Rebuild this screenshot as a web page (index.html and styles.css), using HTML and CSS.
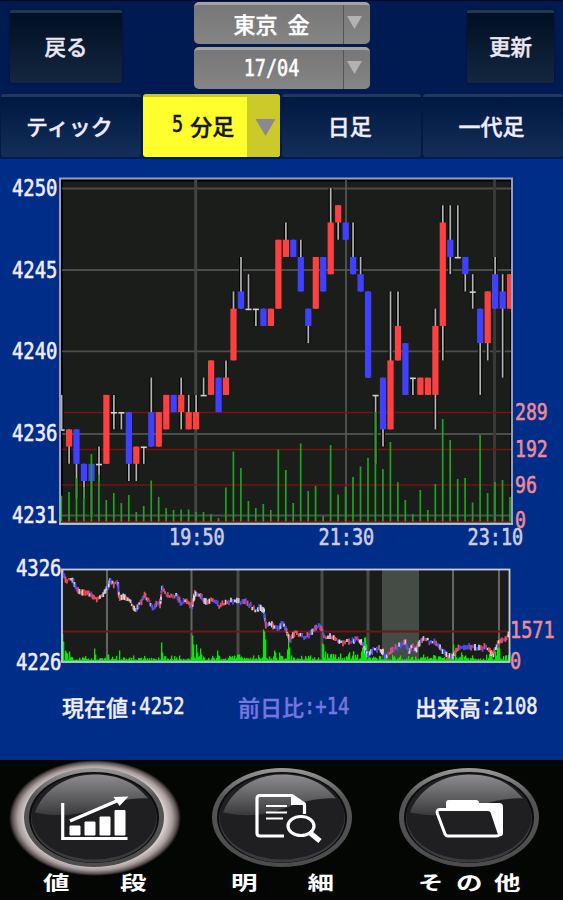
FILE: index.html
```html
<!DOCTYPE html>
<html lang="ja">
<head>
<meta charset="utf-8">
<title>東京 金</title>
<link rel="stylesheet" href="styles.css">
</head>
<body>
<header class="header">
  <button class="nav back">戻る</button>
  <div class="selectors">
    <div class="select"><span class="value">東京 金</span><span class="arrow"></span></div>
    <div class="select"><span class="value"><span class="num">17/04</span></span><span class="arrow"></span></div>
  </div>
  <button class="nav refresh">更新</button>
</header>
<nav class="tabs">
  <div class="tab">ティック</div>
  <div class="tab active"><span class="tab-text"><span class="num">5</span><span class="thin-gap"></span>分足</span><span class="tab-arrow"></span></div>
  <div class="tab">日足</div>
  <div class="tab">一代足</div>
</nav>
<main class="main">
  <svg class="chart" id="chart" viewBox="0 160 563 391" width="563" height="391"></svg>
  <svg class="chart" id="overview" viewBox="0 551 563 125" width="563" height="125"></svg>
  <div class="stats">
    <span class="stat">現在値<span class="num">:4252</span></span>
    <span class="stat change">前日比<span class="num">:+14</span></span>
    <span class="stat">出来高<span class="num">:2108</span></span>
  </div>
</main>
<footer class="footer">
  <svg viewBox="0 760 188 140" width="188" height="140">
    <defs>
      <linearGradient id="ring" x1="0" y1="0" x2="0" y2="1"><stop offset="0" stop-color="#999"/><stop offset=".3" stop-color="#555"/><stop offset="1" stop-color="#4c4c4c"/></linearGradient>
      <linearGradient id="gloss" x1="0" y1="0" x2="0" y2="1"><stop offset="0" stop-color="#8e8c90"/><stop offset="1" stop-color="#3a3a3c"/></linearGradient>
      <radialGradient id="glow"><stop offset=".82" stop-color="#d6cccc"/><stop offset=".9" stop-color="#a79b9b"/><stop offset=".96" stop-color="#5b5252"/><stop offset="1" stop-color="#040604"/></radialGradient>
      <g id="orb">
        <ellipse rx="70" ry="49.500" fill="url(#ring)"/>
        <ellipse rx="65" ry="45.500" fill="#0c0c0e"/>
        <ellipse cy="1" rx="63" ry="44" fill="#3a3a3c"/>
        <ellipse cy="-1" rx="62.500" ry="43" fill="#1f1e20"/>
        <path d="M-59-5C-50-29-26-43 0-43S42-34 54-19C38-20 20-16 2-9C-18-1-40-1-59-5Z" fill="url(#gloss)"/>
      </g>
    </defs>
    <ellipse cx="95" cy="818" rx="86" ry="58" fill="url(#glow)"/>
    <use href="#orb" x="94" y="817.500"/>
    <path d="M62.700 803V838.500H127.500" fill="none" stroke="#fff" stroke-width="3.200"/>
    <path d="M70 826H80V835H70ZM85 822H95V835H85ZM100 817H110V835H100ZM115 810.500H125V835H115Z" fill="#fff" stroke="#fff" stroke-linejoin="round"/>
    <path d="M70 821L119 800" stroke="#fff" stroke-width="3.500"/>
    <path d="M113.500 797L128.500 796.500L119.500 806Z" fill="#fff"/>
    <g class="label"><text transform="translate(43 889.500) scale(1.36 1)">値</text><text transform="translate(120 889.500) scale(1.36 1)">段</text></g>
  </svg>
  <svg viewBox="188 760 187 140" width="187" height="140">
    <use href="#orb" x="282" y="817.500"/>
    <g fill="none" stroke="#fff" stroke-width="3.200" stroke-linejoin="round">
      <path d="M284 836H260Q257 836 257 833V799Q257 795.500 260 795.500H292L304.500 804V814"/>
      <path d="M266 806H287M266 812.500H287M266 818.500H283" stroke-width="2.200"/>
      <ellipse cx="301" cy="826" rx="13" ry="9.500"/>
      <path d="M309 832L320 841" stroke-width="5"/>
    </g>
    <path d="M291 795L306 805H291Z" fill="#fff"/>
    <g class="label"><text transform="translate(231 889.500) scale(1.36 1)">明</text><text transform="translate(307.500 889.500) scale(1.36 1)">細</text></g>
  </svg>
  <svg viewBox="375 760 188 140" width="188" height="140">
    <use href="#orb" x="469" y="817.500"/>
    <path d="M446 809V803Q446 800 449 800H476Q479 800 479 803H500Q503 803.500 503 807V834Q502 837 499 836L491 809Z" fill="#fff"/>
    <path d="M440 809.500H488Q491 809.500 492 812L499 833Q500 836 496 836H448Q446 836 445 834L437.500 814Q436 809.500 440 809.500Z" fill="#202022" stroke="#fff" stroke-width="3"/>
    <g class="label"><text transform="translate(418 889.500) scale(1.3 1)">そ</text><text transform="translate(456 889.500) scale(1.36 1)">の</text><text transform="translate(494 889.500) scale(1.36 1)">他</text></g>
  </svg>
</footer>
<script src="chart.js"></script>
</body>
</html>
```
FILE: styles.css
```css
* { box-sizing: border-box; }
body {
  margin: 0;
  width: 563px;
  height: 900px;
  overflow: hidden;
  display: flex;
  flex-direction: column;
  background: #002d87;
  color: #f0ecfa;
  font-family: "Noto Sans CJK JP", sans-serif;
  font-weight: 500;
  font-size: 22px;
  -webkit-text-stroke: 0.4px currentColor;
}
.num {
  display: inline-block;
  font-family: "DejaVu Sans Mono", monospace;
  font-size: 18.5px;
  line-height: 22px;
  transform: scaleY(1.2);
  -webkit-text-stroke: 0.5px currentColor;
}
.header {
  height: 94px;
  display: flex;
  justify-content: space-between;
  padding: 1px 9px 0 10px;
  background: #001a52;
  border-top: 1px solid #000820;
}
.nav {
  margin: 8px 0 0;
  height: 73px;
  border: 0;
  border-top: 3px solid #23374f;
  border-radius: 2px;
  padding: 0 0 5px;
  background: linear-gradient(#000f22, #132740);
  box-shadow: 0 0 2px #000c30;
  color: #ebe7f3;
  font: inherit;
  font-size: 21.5px;
}
.back { width: 112px; }
.refresh { width: 87px; }
.selectors {
  display: flex;
  flex-direction: column;
  gap: 3px;
  width: 176px;
  margin-left: 48px;
  margin-right: 73px;
}
.select {
  display: flex;
  height: 42px;
  border-radius: 5px;
  border-top: 3px solid #a4a2a5;
  background: linear-gradient(#777, #858585);
  box-shadow: 0 0 1px #333;
  color: #fff;
}
.value {
  flex: 1;
  border-right: 1px solid #555;
  display: flex;
  align-items: center;
  justify-content: center;
  padding: 0 0 4px 6px;
  white-space: pre;
  word-spacing: 5px;
}
.value .num { padding-top: 2px; }
.arrow { width: 26px; padding: 11px 0 0 3px; }
.arrow::before, .tab-arrow::before {
  content: "";
  display: block;
  width: 15px;
  height: 13px;
  background: #b2b2b2;
  clip-path: polygon(0 0, 100% 0, 50% 100%);
}
.tabs { display: flex; gap: 2px; height: 66px; padding: 0 0 2px 1px; background: #001a4b; border-bottom: 1px solid #002d87; }
.tab {
  flex: 1;
  display: flex;
  align-items: center;
  justify-content: center;
  border-top: 3px solid #20395e;
  border-radius: 3px;
  padding: 0 3px 4px 0;
  background: linear-gradient(#001840, #132e59);
}
.active {
  border-top-color: #c9c92e;
  background: #ffff2e;
  color: #15150a;
  align-items: stretch;
  padding: 0;
}
.tab-text { flex: 1; display: flex; align-items: center; justify-content: center; padding: 0 0 4px 17px; }
.thin-gap { width: 7px; }
.tab-arrow { width: 33px; padding: 22px 0 0 9px; background: #cbca28; border-radius: 0 0 3px 0; }
.tab-arrow::before { width: 20px; height: 17px; background: #8c8790; }
.main { flex: 1; }
.chart { display: block; }
.axis text {
  font-family: "DejaVu Sans Mono", monospace;
  font-size: 18.5px;
  fill: #f0ecfa;
  stroke: #f0ecfa;
  stroke-width: 0.5px;
  -webkit-text-stroke: initial;
}
.axis text.volume { fill: #ee8a96; stroke: #ee8a96; }
.axis text.time { fill: #cfcbe2; stroke: #cfcbe2; }
.stats {
  display: grid;
  grid-template-columns: 176px 177px auto;
  padding: 13px 0 0 62px;
  line-height: 32px;
  white-space: nowrap;
}
.stat { display: flex; align-items: center; }
.stat .num { line-height: 32px; font-size: 18.8px; padding-top: 2px; }
.change { color: #7775e0; }
.footer { height: 140px; display: flex; background: #040604; }
.label { fill: #fff; font-size: 19.5px; font-weight: 700; -webkit-text-stroke: 0; }
```
FILE: chart.js
```js
const parts = [];
const line = (x1, y1, x2, y2, color, w) =>
  parts.push(`<path d="M${x1} ${y1}L${x2} ${y2}" stroke="${color}" stroke-width="${w}"/>`);
const rect = (x, y, w, h, fill, extra = '') =>
  parts.push(`<rect x="${x}" y="${y}" width="${w}" height="${h}" fill="${fill}" ${extra}/>`);
const label = (x, y, text, cls = '', sx = 1.02) =>
  parts.push(`<text class="${cls}" transform="translate(${x} ${y}) scale(${sx} 1.22)">${text}</text>`);
const flush = id => {
  document.getElementById(id).innerHTML = '<g class="axis">' + parts.join('') + '</g>';
  parts.length = 0;
};

// kind, body top, body bottom, wick high, wick low (in price steps below 4250), volume bar top
const candles = [
  ['W',14,14,12,14,495.7],['R',14,15,14,16,492],['B',14,16,14,18,478],['B',16,17,16,18,487],['B',16,17,16,19,454],
  ['W',16,16,15,17,474.5],['R',12,16,12,16,500],['W',13,13,12,14,493],['W',13,13,13,14,503],['B',13,16,13,17,495],
  ['R',15,16,15,17,512],['W',15,15,15,16,506],['B',13,15,11,15,480.5],['R',13,15,13,15,497],['R',12,14,12,14,508],
  ['B',12,13,12,13,510],['R',12,13,11,14,509.5],['R',13,14,12,14,509.5],['R',13,14,12,14,512],['W',12,12,11,12,512],
  ['R',10,12,10,12,514],['B',11,13,11,13,518],['R',11,12,10,12,487.5],['R',7,10,6,10,451.5],['B',6,7,4,7,468],
  ['W',7,7,5,7,501],['W',7,7,7,8,508],['B',7,8,7,8,504],['R',7,8,7,8,510],['R',3,7,3,7,449.5],
  ['R',3,4,2,4,470],['B',3,4,3,4,503],['B',4,6,3,6,443.5],['B',7,8,7,9,491],['R',4,7,4,7,486],
  ['B',4,6,4,6,516],['R',2,5,0,5,445],['R',1,2,1,3,494.5],['B',2,3,2,3,487],['B',4,5,2,5,477],
  ['B',5,6,4,6,466.5],['B',6,11,6,11,458],['W',12,12,12,16,412],['B',11,14,11,15,469],['R',10,14,6,14,442],
  ['R',8,10,6,10,482],['B',9,12,9,12,500],['W',11,11,11,12,514],['R',11,12,11,12,490],['R',11,12,11,12,510],
  ['R',8,12,7,14,484],['R',2,8,1,10,419],['B',3,4,1,5,440],['W',4,4,1,4,479],['B',4,5,4,6,478],
  ['W',6,6,5,7,502.5],['B',7,9,7,12,435],['R',6,9,6,10,493],['B',5,7,4,7,482],['B',6,7,5,11,480],['R',5,7,5,7,497]
];
const level = k => 188 + 17.24 * k;

rect(60, 178.5, 452, 345.5, '#000');
rect(63, 181.5, 447, 340, '#1b1d1b');
[188.5, 270, 351.3, 434, 515.5].forEach(y => line(62, y, 511, y, '#4a4e4a', 1.8));
line(195.7, 180, 195.7, 523, '#414541', 3);
line(346, 180, 346, 523, '#5a5d5a', 1.6);
line(494.5, 180, 494.5, 523, '#383a38', 3);
[412.5, 449.5, 485, 521.5].forEach(y => line(62, y, 511, y, '#751313', 1.4));
candles.forEach(([kind, top, bottom, high, low], i) => {
  const x = +(61.6 + 7.475 * i).toFixed(1);
  if (high !== low) {
    line(x, level(high), x, level(low), '#050505', 4);
    line(x, level(high), x, level(low), '#b4b4b4', 1.7);
  }
  if (kind === 'W') line(Math.max(x - 3, 61), level(top) + 0.7, x + 3, level(top) + 0.7, '#d2d2d2', 1.6);
  else rect(x - 3.1, level(top), i === 60 ? 4.6 : 6.2, level(bottom) - level(top), kind === 'R' ? '#ff4040' : '#4040ff');
});
candles.forEach((c, i) => {
  const x = +(61.5 + 7.475 * i).toFixed(1);
  line(x, c[5], x, 521.5, '#1ca51c', 1.7);
});
rect(60, 178.5, 452, 345, 'none', 'stroke="#9d9bb5" stroke-width="2"');
line(59, 524, 513, 524, '#cfcee0', 1.6);
[[196, 4250], [277.5, 4245], [359, 4240], [440.5, 4236], [523, 4231]].forEach(([y, t]) => label(12, y, t));
[[420, 289], [457, 192], [492.5, 96], [528, 0]].forEach(([y, t]) => label(515, y, t, 'volume', 0.98));
[[169, '19:50'], [318.5, '21:30'], [467.5, '23:10']].forEach(([x, t]) => label(x, 545, t, 'time', 1));
flush('chart');

const trend = [[62,572],[66,580],[72,580],[76,587],[83,594],[88,592],[96,600],[104,594],[108,587],[110,579],[113,584],[118,582],[119,598],[124,597],[130,602],[136,610],[145,595],[153,608],[157,603],[160,606],[162,588],[167,595],[172,597],[177,595],[181,603],[186,599],[192,607],[195,593],[200,596],[205,602],[212,600],[220,606],[228,601],[236,602],[245,602],[250,605],[256,611],[260,606],[264,611],[266,626],[270,623],[275,628],[280,627],[283,622],[287,632],[290,641],[296,632],[305,638],[313,631],[318,625],[322,629],[325,638],[333,636],[340,643],[346,641],[352,642],[357,637],[363,645],[368,656],[374,648],[380,649],[386,657],[393,650],[400,645],[405,642],[409,652],[412,645],[416,650],[419,644],[424,638],[430,642],[437,643],[442,650],[447,656],[452,656],[459,646],[465,648],[470,647],[480,649],[487,647],[493,655],[497,645],[501,640],[505,641],[509,634]];
const spikes = {62:28,63:20,65:11,67:8,69:10,94:13,95:7,108:7,119:11,133:6,161:19,162:9,192:26,193:17,196:17,197:9,200:13,201:7,217:11,218:6,234:6,238:7,253:6,263:32,264:30,265:22,274:11,275:9,279:9,287:12,288:24,289:14,322:18,323:17,325:10,327:8,330:7,335:7,340:8,352:6,357:7,361:10,362:14,363:19,364:24,365:24,366:17,368:9,392:7,400:6,423:7,453:17,455:9,461:9,465:6,486:7,490:9,495:10,497:13,498:14,499:13,505:6};
let seed = 17;
const rand = () => (seed = (seed * 16807) % 2147483647) / 2147483647;

rect(62, 569, 448, 93, '#1a1c1a');
[[107,2],[191.5,2],[238,3],[322,3],[368,3],[453,2],[499,2]].forEach(([x, w]) =>
  line(x, 570, x, 662, w === 2 ? '#656565' : '#484a48', w));
rect(382, 570, 37, 92, '#454b45');
line(62, 631.5, 510, 631.5, '#6d1717', 2);
for (let x = 62; x < 510; x++) {
  const busy = (x > 322 && x < 368) || x > 486 || (x > 453 && x < 468) || x < 70;
  const h = spikes[x] || 1.5 + rand() * rand() * (busy ? 11 : 6);
  rect(x, +(661.5 - h).toFixed(1), 1.3, +h.toFixed(1), '#00ec00');
}
const colors = ['#ff4848', '#dcdcdc', '#5050f4', '#e05064', '#5050f4', '#c8c8dc'];
for (let i = 1; i < trend.length; i++) {
  const [x1, y1] = trend[i - 1], [x2, y2] = trend[i];
  const n = Math.max(2, Math.round(Math.hypot(x2 - x1, y2 - y1) / 2));
  for (let j = 0; j < n; j++) {
    const x = +(x1 + (x2 - x1) * (j + 0.5) / n).toFixed(1);
    const y = +(y1 + (y2 - y1) * (j + 0.5) / n + (rand() - 0.5) * 3).toFixed(1);
    const h = 1.2 + rand() * 2;
    line(x, y - h, x, y + h, colors[Math.floor(rand() * 6)], 1.8);
  }
}
rect(62, 569.5, 447.5, 92.5, 'none', 'stroke="#c9c8d8" stroke-width="1.8"');
label(16, 576, 4326);
label(16, 669.5, 4226);
label(510, 637.5, 1571, 'volume', 1);
label(510, 669, 0, 'volume', 1);
flush('overview');
```
